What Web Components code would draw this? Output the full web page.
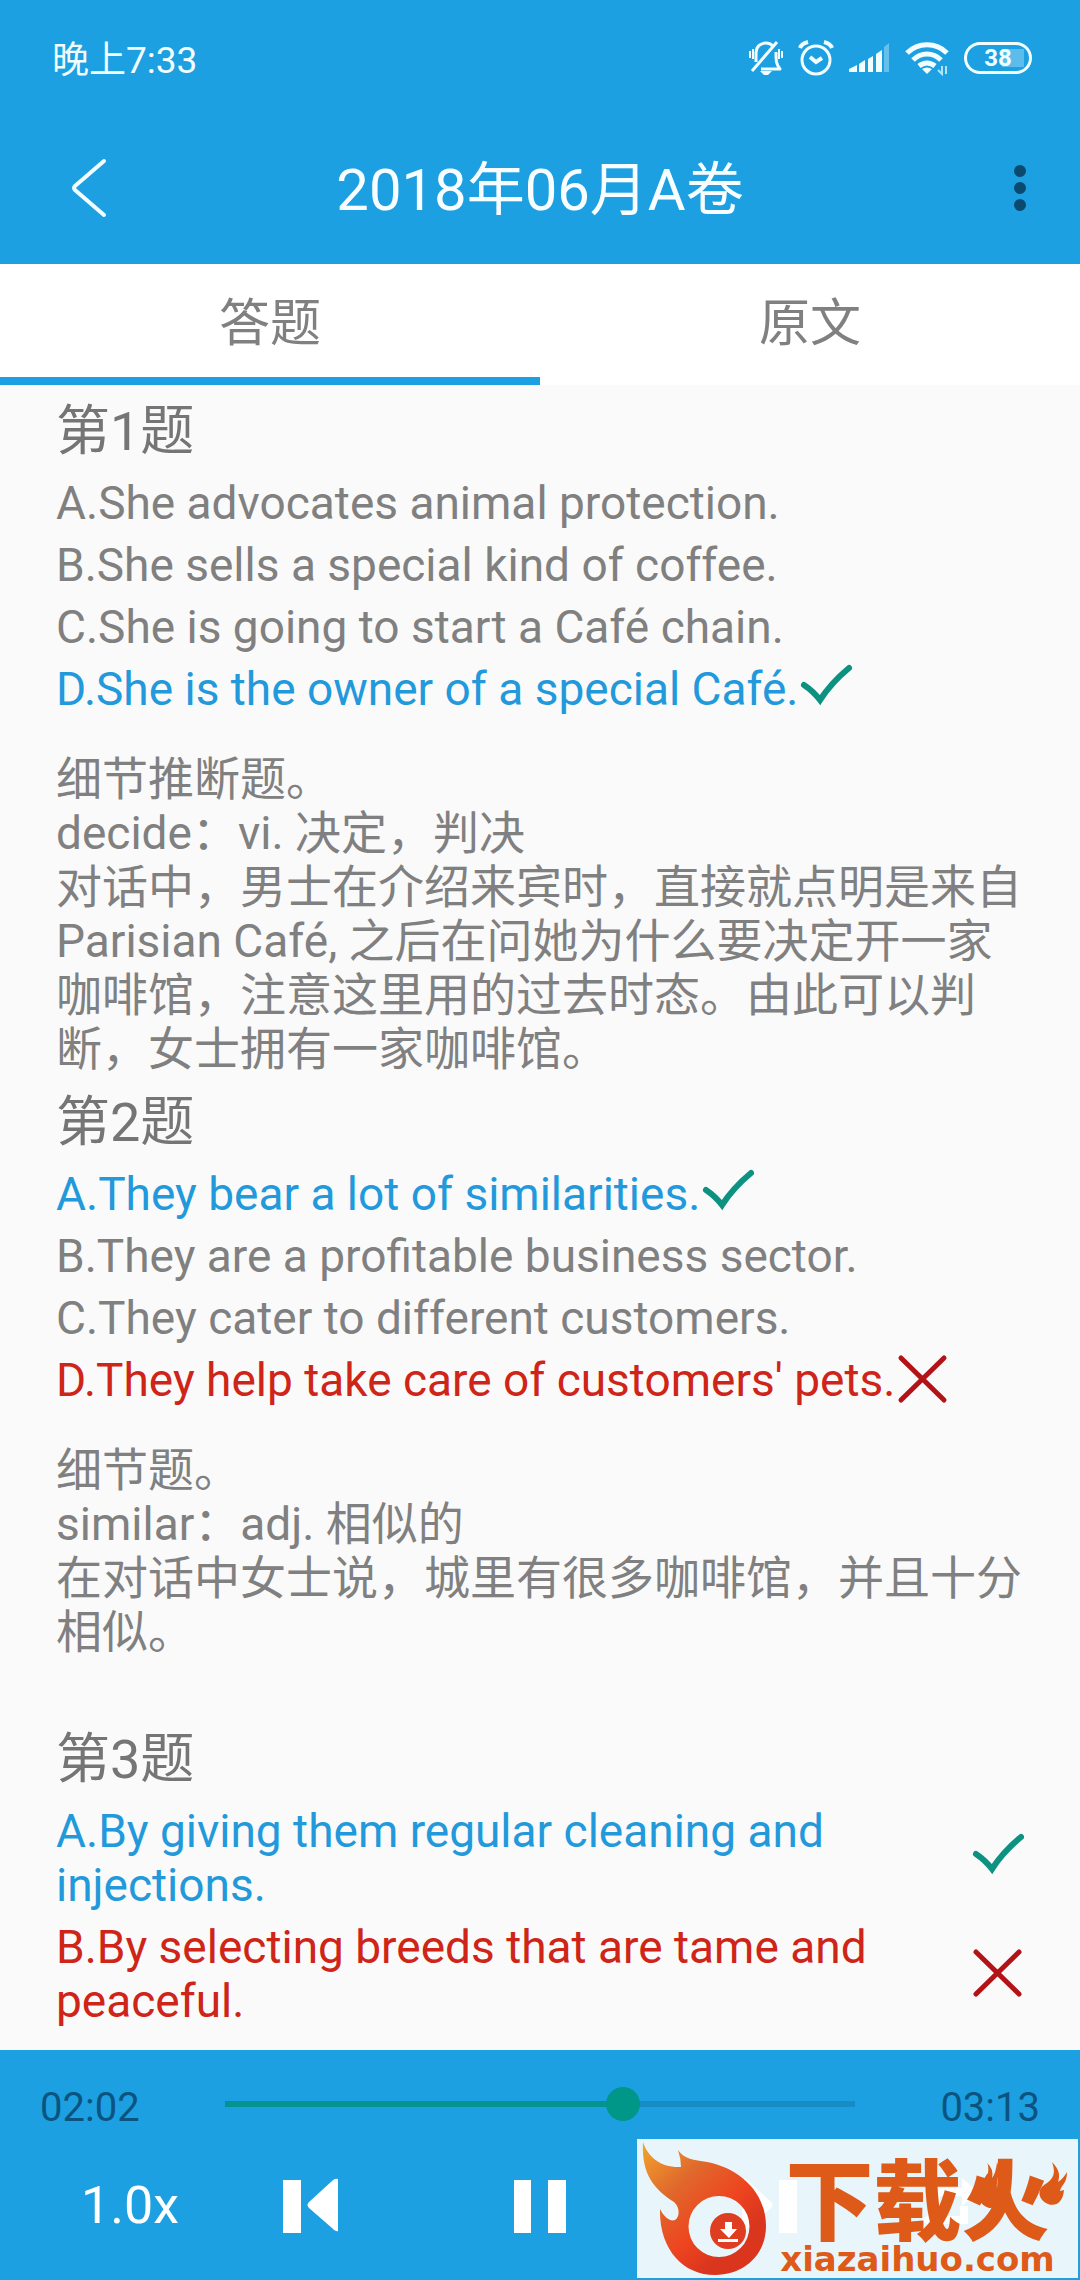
<!DOCTYPE html>
<html lang="zh-CN">
<head>
<meta charset="utf-8">
<meta name="viewport" content="width=device-width, initial-scale=1">
<title>2018年06月A卷</title>
<style>
  :root {
    --blue: #1ca0e2;
    --grey: #808080;
    --teal: #009688;
    --ink: #0b5480;
  }
  body {
    margin: 0;
    min-height: 100vh;
    display: flex;
    flex-direction: column;
    background: #fafafa;
    color: var(--grey);
    font-family: Roboto, "Noto Sans CJK SC", sans-serif;
    font-size: 46px;
    line-height: 54px;
  }
  main {
    flex: 1;
    padding: 0 56px;
  }
</style>
</head>
<body>
  <status-bar time="晚上7:33" battery="38"></status-bar>
  <nav-bar>2018年06月A卷</nav-bar>
  <tab-bar>
    <tab-item active>答题</tab-item>
    <tab-item>原文</tab-item>
  </tab-bar>

  <main>
    <question-item number="1">
      <answer-option>A.She advocates animal protection.</answer-option>
      <answer-option>B.She sells a special kind of coffee.</answer-option>
      <answer-option>C.She is going to start a Café chain.</answer-option>
      <answer-option state="right">D.She is the owner of a special Café.</answer-option>
      <span slot="note">细节推断题。<br>decide：vi. 决定，判决<br>对话中，男士在介绍来宾时，直接就点明是来自Parisian Café, 之后在问她为什么要决定开一家咖啡馆，注意这里用的过去时态。由此可以判断，女士拥有一家咖啡馆。</span>
    </question-item>
    <question-item number="2">
      <answer-option state="right">A.They bear a lot of similarities.</answer-option>
      <answer-option>B.They are a profitable business sector.</answer-option>
      <answer-option>C.They cater to different customers.</answer-option>
      <answer-option state="wrong">D.They help take care of customers' pets.</answer-option>
      <span slot="note">细节题。<br>similar：adj. 相似的<br>在对话中女士说，城里有很多咖啡馆，并且十分相似。<br><br></span>
    </question-item>
    <question-item number="3">
      <answer-option state="right">A.By giving them regular cleaning and injections.</answer-option>
      <answer-option state="wrong">B.By selecting breeds that are tame and peaceful.</answer-option>
    </question-item>
  </main>

  <audio-player current="122" duration="193" speed="1.0x"></audio-player>
  <site-badge></site-badge>

<script>
class StatusBar extends HTMLElement {
  constructor() {
    super();
    this.attachShadow({ mode: "open" });
  }

  connectedCallback() {
    this.shadowRoot.innerHTML = `
      <style>
        :host {
          display: flex;
          align-items: center;
          justify-content: space-between;
          height: 112px;
          padding: 4px 48px 0 52px;
          box-sizing: border-box;
          background: var(--blue);
          color: #f2fdff;
          font-size: 37px;
        }
        .time { padding-top: 6px; }
        .icons {
          display: flex;
          align-items: center;
          gap: 15px;
        }
        svg { display: block; fill: none; stroke: currentColor; }
        .battery {
          box-sizing: border-box;
          width: 68px;
          height: 32px;
          border: 3px solid currentColor;
          border-radius: 16px;
          background: linear-gradient(#5cbdec, #5cbdec) right 5px center / 22px 18px no-repeat;
          font-size: 24px;
          font-weight: 700;
          line-height: 26px;
          text-align: center;
        }
      </style>
      <span class="time">${this.getAttribute("time")}</span>
      <div class="icons">
        <svg width="34" height="36" viewBox="0 0 34 36" stroke-width="3">
          <path d="M7 22V13C7 6 12 3 17 3c3 0 5 1 7 3M27 12c0 9 0 12 4 17H12M3 31 28 2" stroke-linejoin="round"/>
          <path d="M11 31h12l-4 4h-4z" fill="currentColor" stroke="none"/>
          <path d="M1 11v7M4 9v10M30 9v10M33 11v7" stroke-width="2"/>
        </svg>
        <svg width="36" height="36" viewBox="0 0 36 36" stroke-width="3">
          <circle cx="18" cy="20" r="14"/>
          <path d="m12 17 6 5 6-4M2 8c1-3 4-5 8-6M34 8c-1-3-4-5-8-6" stroke-width="4"/>
        </svg>
        <svg width="41" height="32" viewBox="0 0 41 32" style="fill: currentColor; stroke: none">
          <path d="M0 30v-3l8-4v7zM10 22l6-4v12h-6zM19 17l5-3v16h-5zM27 12l6-4v22h-6z"/>
          <path d="M35 5l5-4v29h-5z" opacity=".35"/>
        </svg>
        <svg width="44" height="36" viewBox="0 0 44 36" stroke-width="5">
          <path d="M2 13C13 2 31 2 42 13M8 20c8-8 20-8 28 0M14 26c5-4 11-4 16 0"/>
          <path d="m17 29q5-3 10 0l-5 5z" fill="currentColor" stroke="none"/>
          <path d="M37 26v8l-4-4M41 34v-8" stroke-width="2" opacity=".7"/>
        </svg>
        <div class="battery">${this.getAttribute("battery")}</div>
      </div>
    `;
  }
}

class NavBar extends HTMLElement {
  constructor() {
    super();
    this.attachShadow({ mode: "open" });
    this.shadowRoot.innerHTML = `
      <style>
        :host {
          display: grid;
          grid-template-columns: 120px 1fr 120px;
          align-items: center;
          height: 152px;
          background: var(--blue);
          color: #f8feff;
        }
        h1 {
          margin: 0;
          padding-top: 4px;
          font-size: 58px;
          font-weight: 400;
          line-height: 68px;
          text-align: center;
        }
        button {
          display: flex;
          padding: 0;
          border: 0;
          background: none;
        }
        .back { justify-content: flex-end; padding-right: 12px; }
        .more { justify-content: center; }
      </style>
      <button class="back" aria-label="返回">
        <svg width="38" height="60" viewBox="0 0 38 60" fill="none" stroke="#f2fdff" stroke-width="4" stroke-linecap="round" stroke-linejoin="round">
          <path d="M34 3 5 28q-2 2 0 4l29 25"/>
        </svg>
      </button>
      <h1><slot></slot></h1>
      <button class="more" aria-label="更多">
        <svg width="12" height="46" viewBox="0 0 12 46" fill="#0b4a6e">
          <circle cx="6" cy="6" r="6"/><circle cx="6" cy="23" r="6"/><circle cx="6" cy="40" r="6"/>
        </svg>
      </button>
    `;
  }
}

class TabBar extends HTMLElement {
  constructor() {
    super();
    this.attachShadow({ mode: "open" });
    this.shadowRoot.innerHTML = `
      <style>
        :host { display: flex; background: #fff; }
      </style>
      <slot></slot>
    `;
  }
}

class TabItem extends HTMLElement {
  constructor() {
    super();
    this.attachShadow({ mode: "open" });
    this.shadowRoot.innerHTML = `
      <style>
        :host { flex: 1; display: flex; }
        button {
          flex: 1;
          height: 121px;
          padding: 6px 0 0;
          border: 0;
          border-bottom: 8px solid transparent;
          background: none;
          color: inherit;
          font: inherit;
          font-size: 51px;
        }
        :host([active]) button { border-color: var(--blue); }
      </style>
      <button><slot></slot></button>
    `;
  }
}

class QuestionItem extends HTMLElement {
  constructor() {
    super();
    this.attachShadow({ mode: "open" });
  }

  connectedCallback() {
    this.shadowRoot.innerHTML = `
      <style>
        :host { display: block; }
        h2 {
          margin: 0;
          padding: 15px 0 8px;
          color: #757575;
          font-size: 54px;
          font-weight: 400;
          line-height: 64px;
        }
        .note { margin: 32px 0 0; }
      </style>
      <h2>第${this.getAttribute("number")}题</h2>
      <slot></slot>
      ${this.querySelector("[slot=note]") ? '<p class="note"><slot name="note"></slot></p>' : ""}
    `;
  }
}

const MARKS = {
  right: '<path d="M6 23 Q15 29 22 38 Q33 21 51 6" stroke="#0d9282" stroke-width="6"/>',
  wrong: '<path d="M6 5 49 47M49 5 6 47" stroke="#b31217" stroke-width="5"/>',
};

class AnswerOption extends HTMLElement {
  constructor() {
    super();
    this.attachShadow({ mode: "open" });
  }

  connectedCallback() {
    const mark = MARKS[this.getAttribute("state")];
    this.shadowRoot.innerHTML = `
      <style>
        :host {
          display: flex;
          align-items: center;
          padding: 4px 0;
        }
        :host([state="right"]) { color: #2299da; }
        :host([state="wrong"]) { color: #cf2418; }
        svg { flex: none; }
      </style>
      <span><slot></slot></span>
      ${mark ? `<svg width="54" height="54" viewBox="0 0 54 54" fill="none" stroke-linecap="round">${mark}</svg>` : ""}
    `;
  }
}

function clock(seconds) {
  const m = String(Math.floor(seconds / 60)).padStart(2, "0");
  const s = String(seconds % 60).padStart(2, "0");
  return `${m}:${s}`;
}

class AudioPlayer extends HTMLElement {
  constructor() {
    super();
    this.attachShadow({ mode: "open" });
  }

  connectedCallback() {
    const current = Number(this.getAttribute("current"));
    const duration = Number(this.getAttribute("duration"));
    this.shadowRoot.innerHTML = `
      <style>
        :host {
          display: block;
          height: 230px;
          box-sizing: border-box;
          padding: 28px 40px 0;
          background: var(--blue);
        }
        .seek {
          display: flex;
          align-items: center;
          justify-content: space-between;
          color: var(--ink);
          font-size: 40px;
          line-height: 60px;
        }
        input {
          appearance: none;
          flex: 1;
          height: 34px;
          margin: 0 68px 8px;
          background: linear-gradient(to right, #04948f var(--played), #168bc4 var(--played)) center / calc(100% - 34px) 6px no-repeat;
        }
        input::-webkit-slider-thumb {
          appearance: none;
          width: 34px;
          height: 34px;
          border-radius: 50%;
          background: var(--teal);
        }
        .controls {
          display: grid;
          grid-template-columns: 9fr 9fr 14fr 9fr 9fr;
          height: 136px;
        }
        button {
          display: flex;
          align-items: center;
          justify-content: center;
          padding: 0;
          border: 0;
          background: none;
          color: #fff;
          font: inherit;
          font-size: 52px;
        }
        svg { fill: currentColor; }
      </style>
      <div class="seek">
        <span>${clock(current)}</span>
        <input type="range" aria-label="播放进度" min="0" max="${duration}" value="${current}" style="--played: ${(current / duration) * 100}%">
        <span>${clock(duration)}</span>
      </div>
      <div class="controls">
        <button>${this.getAttribute("speed")}</button>
        <button aria-label="上一题">
          <svg width="56" height="56" viewBox="0 0 56 56"><path d="M1 2h18v53H1zM56 1v52q-3 1-6-3L27 30q-3-3 0-6L50 3q3-3 6-2z"/></svg>
        </button>
        <button aria-label="暂停">
          <svg width="52" height="56" viewBox="0 0 52 56"><path d="M0 2h17v53H0zM34 2h18v53H34z"/></svg>
        </button>
        <button aria-label="下一题">
          <svg width="56" height="56" viewBox="0 0 56 56"><path d="M37 2h18v53H37zM0 1v52q3 1 6-3l23-20q3-3 0-6L6 3Q3 0 0 1z"/></svg>
        </button>
        <button aria-label="循环">
          <svg width="60" height="60" viewBox="0 0 60 60"><path d="M12 12h30V2l16 14-16 14V20H20v10h-8zM48 48H18v10L2 44l16-14v10h22V30h8z"/></svg>
        </button>
      </div>
    `;
  }
}

class SiteBadge extends HTMLElement {
  constructor() {
    super();
    this.attachShadow({ mode: "open" });
    this.shadowRoot.innerHTML = `
      <style>
        :host {
          position: absolute;
          right: 2px;
          bottom: 2px;
          display: flex;
          width: 441px;
          height: 139px;
          background: rgba(255, 255, 255, 0.9);
          color: #dd5a18;
        }
        .flame { flex: none; }
        .words {
          flex: 1;
          display: flex;
          flex-direction: column;
          align-items: center;
          padding: 12px 10px 0 0;
        }
        .name {
          display: flex;
          gap: 12px;
          font-family: "Noto Sans CJK SC", sans-serif;
          font-size: 88px;
          font-weight: 900;
          line-height: 88px;
        }
        .url {
          font-family: "DejaVu Sans", sans-serif;
          font-size: 34px;
          font-weight: 700;
          line-height: 40px;
        }
        .sparks {
          position: absolute;
          right: 10px;
          top: 22px;
        }
      </style>
      <svg class="flame" width="130" height="139" viewBox="0 0 130 139">
        <defs>
          <linearGradient id="fire" x1="0" y1="0" x2="0.7" y2="0.8">
            <stop offset="0" stop-color="#f3a52c"/>
            <stop offset="0.4" stop-color="#e0692c"/>
            <stop offset="0.75" stop-color="#ee4420"/>
            <stop offset="1" stop-color="#d9361d"/>
          </linearGradient>
        </defs>
        <path fill="url(#fire)" fill-rule="evenodd" d="M6 3C11 18 24 29 44 28Q44 20 41 11C47 20 57 21 70 23C102 29 129 53 129 87C129 116 107 136 78 136C46 136 22 110 23 70C27 78 33 83 38 81C43 78 43 68 37 63C20 52 4 38 6 3zM82 57A30 30 0 1 0 82 118A30 30 0 1 0 82 57z"/>
        <circle cx="91" cy="92" r="18" fill="#df3d22"/>
        <path fill="#fff" d="M88 83h7v7h5l-8 9-9-9h5zM81 100h20v3H81z"/>
      </svg>
      <div class="words">
        <span class="name">下载火</span>
        <span class="url">xiazaihuo.com</span>
      </div>
      <svg class="sparks" width="92" height="48" viewBox="0 0 92 48" fill="currentColor">
        <path d="M13 47C3 44 1 35 5 30C9 24 6 18 12 12Q13 5 11 2Q18 8 16 17Q20 12 21 1C26 12 18 22 22 31C25 40 20 48 13 47z"/>
        <path d="M72 43C62 39 61 29 68 24C78 18 80 12 76 1C84 9 84 15 82 21Q87 18 91 11C91 23 85 24 84 30L88 29C87 41 80 46 72 43z"/>
      </svg>
    `;
  }
}

customElements.define("status-bar", StatusBar);
customElements.define("nav-bar", NavBar);
customElements.define("tab-bar", TabBar);
customElements.define("tab-item", TabItem);
customElements.define("question-item", QuestionItem);
customElements.define("answer-option", AnswerOption);
customElements.define("audio-player", AudioPlayer);
customElements.define("site-badge", SiteBadge);
</script>
</body>
</html>
